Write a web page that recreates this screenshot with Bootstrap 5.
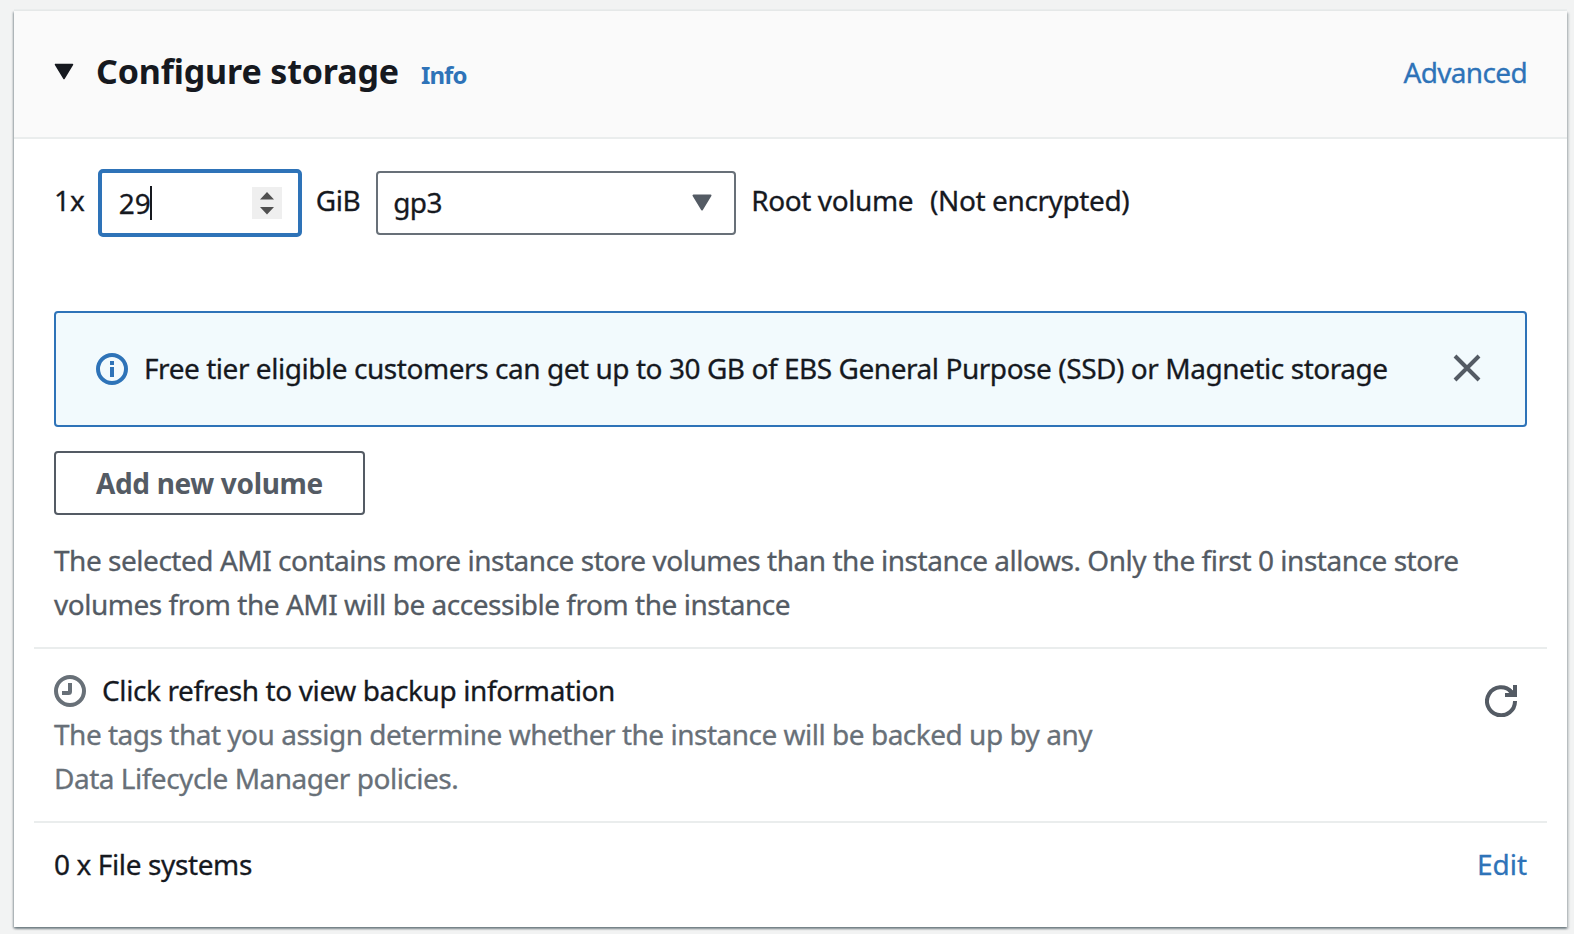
<!DOCTYPE html>
<html lang="en">
<head>
<meta charset="utf-8">
<meta name="viewport" content="width=device-width, initial-scale=1">
<title>Configure storage</title>
<link href="https://cdn.jsdelivr.net/npm/bootstrap@5.3.0/dist/css/bootstrap.min.css" rel="stylesheet">
<style>
  body { min-height: 100vh; background: #f2f3f3; color: #16191f; font-family: "Noto Sans", "Open Sans", sans-serif; font-size: 28px; line-height: 44px; -webkit-text-stroke: .3px; }
  a { color: #2e73b8; text-decoration: none; }
  .panel { margin: 11px 7px 0 14px; height: 916px; border: 0; border-radius: 0; color: inherit;
    box-shadow: 0 2px 2px 0 rgba(0,28,36,.3), 2px 2px 2px 0 rgba(0,28,36,.15), -1px 1px 2px 0 rgba(0,28,36,.3), 0 -2px 0 0 #eaeded; }
  .panel-head { height: 128px; padding: 0 40px 3px; background: #fafafa; border-bottom: 2px solid #eaeded; }
  .panel-head h2 { font-size: 34px; line-height: 44px; font-weight: 700; margin-left: 22px; letter-spacing: -.15px; -webkit-text-stroke: 0; }
  .head-mark { align-self: flex-start; margin-top: 14px; }
  .info-link { font-size: 24px; font-weight: 700; letter-spacing: -.9px; margin-left: 22px; -webkit-text-stroke: 0; }
  .tight { letter-spacing: -.47px; }
  .advanced { letter-spacing: -.65px; padding-bottom: 2px; }
  .panel-body { padding: 30px 40px 0; }
  .volume-row { height: 68px; }
  .row-label { padding-bottom: 6px; }
  .size-box { width: 204px; height: 68px; margin-left: 13px; padding: 0 16px 0 17px; border: 4px solid #2e73b8; border-radius: 5px; background: #fff; }
  .caret { width: 2px; height: 34px; background: #16191f; margin-left: -1px; }
  .spin { width: 30px; height: 32px; background: #efefef; }
  .gib { margin-left: 14px; letter-spacing: -.5px; }
  .type-box { width: 360px; height: 64px; margin-left: 16px; padding: 0 22px 2px 15px; border: 2px solid #687078; border-radius: 4px; }
  .type-name { letter-spacing: -.6px; }
  .root-name { margin-left: 15px; letter-spacing: -.4px; }
  .enc { margin-left: 17px; letter-spacing: -.4px; }
  .free-tier { height: 116px; margin: 74px 0 24px; padding: 0 41px 0 40px; border: 2px solid #2e73b8; border-radius: 4px; background: #f2fafd; color: inherit; }
  .free-text { margin-left: 16px; padding-bottom: 2px; letter-spacing: -.45px; }
  .btn-volume { width: 311px; height: 64px; padding: 0 40px; border: 2px solid #545b64; border-radius: 4px; color: #545b64; font-size: 28px; font-weight: 700; line-height: 58px; letter-spacing: -.35px; text-align: left; white-space: nowrap; -webkit-text-stroke: 0; }
  .note { color: #545b64; margin: 23px 0 21px; }
  .rule { height: 2px; margin: 0 -20px; background: #eaeded; }
  .backup { padding: 19px 0 21px; }
  .clock { margin-top: 1px; }
  .click-text { margin-left: 16px; letter-spacing: -.39px; }
  .muted-text { color: #687078; letter-spacing: -.49px; }
  .refresh { margin: 17px 10px 0 0; }
  .files { padding-top: 19px; }
  .files-text { letter-spacing: -.38px; }
  svg { display: block; flex: none; }
</style>
</head>
<body>
<main class="card panel">
  <header class="panel-head d-flex align-items-center justify-content-between">
    <div class="d-flex align-items-baseline">
      <svg class="head-mark" width="20" height="17" viewBox="0 0 20 17"><path d="M1.500 1.500h17L10 15.500z" fill="#16191f" stroke="#16191f" stroke-width="1.500" stroke-linejoin="round"/></svg>
      <h2 class="mb-0">Configure storage</h2>
      <a class="info-link" href="#">Info</a>
    </div>
    <a class="advanced" href="#">Advanced</a>
  </header>

  <div class="panel-body">
    <div class="volume-row d-flex align-items-center text-nowrap">
      <span class="row-label">1x</span>
      <div class="size-box d-flex align-items-center">
        <span>29</span><span class="caret"></span>
        <svg class="spin ms-auto" width="30" height="32" viewBox="0 0 30 32"><path d="M8 12.500 15 5l7 7.500zM8 20h14l-7 7.500z" fill="#505050"/></svg>
      </div>
      <span class="row-label gib">GiB</span>
      <div class="type-box d-flex align-items-center justify-content-between">
        <span class="type-name">gp3</span>
        <svg width="20" height="17" viewBox="0 0 20 17"><path d="M1.500 1.500h17L10 15.500z" fill="#545b64" stroke="#545b64" stroke-width="2" stroke-linejoin="round"/></svg>
      </div>
      <span class="row-label root-name">Root volume</span>
      <span class="row-label enc">(Not encrypted)</span>
    </div>

    <div class="free-tier alert d-flex align-items-center" role="alert">
      <svg width="32" height="32" viewBox="0 0 32 32"><circle cx="16" cy="16" r="14" fill="none" stroke="#2e73b8" stroke-width="4"/><path d="M14 8h4v4h-4zM14 14h4v10h-4z" fill="#2e73b8"/></svg>
      <span class="free-text text-nowrap">Free tier eligible customers can get up to 30 GB of EBS General Purpose (SSD) or Magnetic storage</span>
      <svg class="ms-auto" width="34" height="34" viewBox="0 0 34 34"><path d="m5 4 24 24M29 4 5 28" stroke="#545b64" stroke-width="4"/></svg>
    </div>

    <button class="btn btn-volume d-block" type="button">Add new volume</button>

    <p class="note tight text-nowrap">The selected AMI contains more instance store volumes than the instance allows. Only the first 0 instance store<br>volumes from the AMI will be accessible from the instance</p>

    <div class="rule"></div>

    <section class="backup d-flex justify-content-between">
      <div>
        <div class="d-flex align-items-center">
          <svg class="clock" width="32" height="32" viewBox="0 0 32 32" fill="none" stroke="#687078" stroke-width="4"><circle cx="16" cy="16" r="14"/><path d="M16 8v8.500q0 1.500-1.500 1.500H8"/></svg>
          <span class="click-text">Click refresh to view backup information</span>
        </div>
        <div class="muted-text text-nowrap">The tags that you assign determine whether the instance will be backed up by any<br>Data Lifecycle Manager policies.</div>
      </div>
      <svg class="refresh" width="32" height="32" viewBox="0 0 32 32" fill="none" stroke="#545b64" stroke-width="4"><path d="M30 16A14 14 0 1 1 26.500 7"/><path d="M20 10h10V0"/><path d="M24 5l6 5"/></svg>
    </section>

    <div class="rule"></div>

    <div class="files d-flex justify-content-between">
      <span class="files-text">0 x File systems</span>
      <a href="#">Edit</a>
    </div>
  </div>
</main>
<script src="https://cdn.jsdelivr.net/npm/bootstrap@5.3.0/dist/js/bootstrap.bundle.min.js"></script>
</body>
</html>
